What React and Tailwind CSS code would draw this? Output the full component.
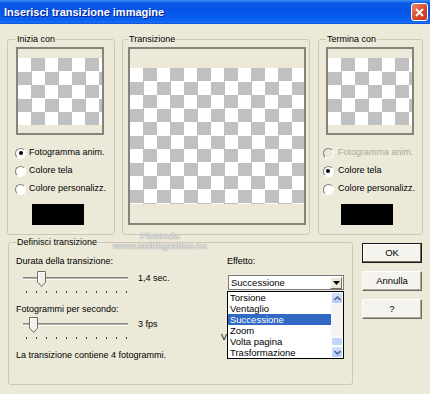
import React from 'react';

function Checker({ className }) {
  return (
    <div
      className={`bg-[conic-gradient(#c0c0c0_25%,#fff_0_50%,#c0c0c0_0_75%,#fff_0)] bg-[length:27px_27px] ${className}`}
    />
  );
}

function Radio({ checked, disabled }) {
  return (
    <span
      className={`w-[11px] h-[11px] rounded-full border border-t-[#808080] border-l-[#808080] border-b-white border-r-white flex items-center justify-center shrink-0 ${
        disabled ? 'bg-[#ece9d8]' : 'bg-white'
      }`}
    >
      {checked && <span className="w-[4px] h-[4px] rounded-full bg-black" />}
    </span>
  );
}

function Group({ label, className, children }) {
  return (
    <fieldset className={`border border-[#cbc8b6] rounded-[3px] ${className}`}>
      <legend className="px-[1px] leading-[11px]">{label}</legend>
      {children}
    </fieldset>
  );
}

function SidePanel({ label, checkedIndex, disabledIndex, radioClass, swatchClass, padClass }) {
  const items = ['Fotogramma anim.', 'Colore tela', 'Colore personalizz.'];
  return (
    <Group label={label} className={`w-[103px] h-[201px] ${padClass}`}>
      <div className="mt-[2px] w-[88px] h-[88px] border-2 border-[#85837a] flex flex-col justify-center">
        <Checker className="w-full h-[67px]" />
      </div>
      <div className="mt-[9px] flex flex-col">
        {items.map((t, i) => (
          <div key={t} className={`h-[18px] flex items-center whitespace-nowrap ${radioClass}`}>
            <Radio checked={i === checkedIndex} disabled={i === disabledIndex} />
            <span className={i === disabledIndex ? 'text-[#aca899]' : ''}>{t}</span>
          </div>
        ))}
      </div>
      <div className={`mt-[6px] w-[52px] h-[21px] bg-black ${swatchClass}`} />
    </Group>
  );
}

function Slider({ pos }) {
  const ticks = Array.from({ length: 11 }, (_, i) => 10 + i * 10);
  return (
    <svg width="120" height="26" viewBox="0 0 120 26">
      <rect x="7" y="8" width="105" height="1" fill="#8c8a80" />
      <rect x="7" y="9" width="105" height="1" fill="#b5b3a8" />
      <rect x="7" y="10" width="105" height="1" fill="#ffffff" />
      {ticks.map((x) => (
        <rect key={x} x={x} y="22" width="1" height="2" fill="#3a3a3a" />
      ))}
      <path
        d={`M${pos + 0.5} 2.5 H${pos + 8.5} V13 L${pos + 4.5} 17.5 L${pos + 0.5} 13 Z`}
        fill="#f1f0ea"
        stroke="#6f6e66"
      />
      <path d={`M${pos + 1.5} 12.5 V3.5 H${pos + 7.5}`} fill="none" stroke="#ffffff" />
    </svg>
  );
}

function ScrollBtn({ up }) {
  return (
    <div className="h-[12px] rounded-[2px] border border-white bg-[linear-gradient(180deg,#d4e0fd,#b7cbf8)] flex items-center justify-center">
      <svg width="7" height="5" viewBox="0 0 7 5">
        <path
          d={up ? 'M0.5 4 L3.5 1 L6.5 4' : 'M0.5 1 L3.5 4 L6.5 1'}
          fill="none"
          stroke="#4d6185"
          strokeWidth="1.5"
        />
      </svg>
    </div>
  );
}

function Button({ children, primary }) {
  return (
    <button
      className={`w-[60px] h-[20px] bg-[#f4f3ee] text-[9.5px] leading-none flex items-center justify-center ${
        primary
          ? 'border border-[#1a1a1a] shadow-[inset_-1px_-1px_#716f64,inset_1px_1px_#fff]'
          : 'border border-t-white border-l-white border-b-[#716f64] border-r-[#716f64] shadow-[inset_-1px_-1px_#aca899]'
      }`}
    >
      {children}
    </button>
  );
}

export default function App() {
  const effects = ['Torsione', 'Ventaglio', 'Successione', 'Zoom', 'Volta pagina', 'Trasformazione'];

  return (
    <div className="relative w-[430px] h-[394px] overflow-hidden bg-[#ece9d8] font-['Liberation_Sans',Arial,sans-serif] text-[9px] text-black">
      {/* title bar */}
      <div className="h-[24px] flex items-center pl-[4px] pr-[2px] bg-[linear-gradient(180deg,#3d8ef8_0%,#0c5be6_12%,#0553e6_45%,#0a62f2_85%,#1a6ff5_93%,#0a4fd8_100%)]">
        <span className="text-white font-bold text-[11px] [text-shadow:1px_1px_#0a1e8c]">
          Inserisci transizione immagine
        </span>
        <div className="ml-auto w-[17px] h-[18px] rounded-[3px] border border-white bg-[linear-gradient(135deg,#f08a6c,#d5492a_55%,#c23a1c)] flex items-center justify-center">
          <svg width="9" height="9" viewBox="0 0 9 9">
            <path d="M1 1 L8 8 M8 1 L1 8" stroke="#fff" strokeWidth="1.8" />
          </svg>
        </div>
      </div>

      <div className="px-[7px] pt-[10px]">
        {/* top row */}
        <div className="flex gap-[7px]">
          <SidePanel
            label="Inizia con"
            checkedIndex={0}
            radioClass="ml-[-1px] gap-[3px]"
            swatchClass="ml-[16px]"
            padClass="w-[107px] px-[8px]"
          />

          <Group label="Transizione" className="w-[191px] h-[201px] pl-[5px]">
            <div className="mt-[2px] w-[178px] h-[178px] border-2 border-[#85837a] flex flex-col justify-center">
              <Checker className="w-full h-[136px]" />
            </div>
          </Group>

          <div className="ml-[1px]">
            <SidePanel
              label="Termina con"
              checkedIndex={1}
              disabledIndex={0}
              radioClass="ml-[-3px] gap-[4px]"
              swatchClass="ml-[15px]"
              padClass="px-[7px]"
            />
          </div>
        </div>

        {/* bottom row */}
        <div className="flex mt-[2px]">
          <Group label="Definisci transizione" className="ml-[1px] w-[345px] h-[148px] pl-[7px]">
            <div className="flex">
              <div className="w-[205px] flex flex-col">
                <div className="mt-[8px] leading-[11px]">Durata della transizione:</div>
                <div className="mt-[2px] flex items-start">
                  <Slider pos={21} />
                  <span className="mt-[4px] ml-[2px] leading-[11px]">1,4 sec.</span>
                </div>
                <div className="mt-[9px] leading-[11px]">Fotogrammi per secondo:</div>
                <div className="flex items-start">
                  <Slider pos={13} />
                  <span className="mt-[4px] ml-[2px] leading-[11px]">3 fps</span>
                </div>
                <div className="mt-[9px] leading-[11px]">La transizione contiene 4 fotogrammi.</div>
              </div>

              <div className="relative flex-1 flex flex-col">
                <div className="mt-[8px] ml-[6px] leading-[11px]">Effetto:</div>
                <div className="mt-[8px] ml-[7px] w-[116px] h-[15px] border border-[#7a7a7a] bg-white flex items-center">
                  <span className="pl-[2px] text-[9.5px] leading-none">Successione</span>
                  <div className="ml-auto mr-[1px] w-[12px] h-[12px] bg-[#ece9d8] border border-t-white border-l-white border-b-[#716f64] border-r-[#716f64] flex items-center justify-center">
                    <svg width="7" height="4" viewBox="0 0 7 4">
                      <path d="M0 0 H7 L3.5 4 Z" fill="#000" />
                    </svg>
                  </div>
                </div>
                {/* only the first letter of this label shows beside the open list */}
                <div className="mt-[42px] leading-[11px]">V</div>

                {/* open dropdown list */}
                <div className="absolute top-[43px] left-[6px] w-[117px] h-[68px] border border-black bg-white flex">
                  <div className="w-[103px] flex flex-col">
                    {effects.map((e) => (
                      <div
                        key={e}
                        className={`h-[11px] leading-[11px] pl-[2px] text-[9.5px] ${
                          e === 'Successione' ? 'bg-[#316ac5] text-white' : ''
                        }`}
                      >
                        {e}
                      </div>
                    ))}
                  </div>
                  <div className="ml-auto w-[12px] flex flex-col bg-[#f5f4f0]">
                    <ScrollBtn up />
                    <div className="flex-1 flex flex-col">
                      <div className="mt-auto h-[9px] rounded-[2px] border border-white bg-[#c3d4fb]" />
                    </div>
                    <ScrollBtn />
                  </div>
                </div>
              </div>
            </div>
          </Group>

          <div className="ml-[9px] mt-[6px] flex flex-col gap-[8px]">
            <Button primary>OK</Button>
            <Button>Annulla</Button>
            <Button>?</Button>
          </div>
        </div>
      </div>

      {/* watermark */}
      <div className="absolute top-[231px] left-[112px] w-[96px] text-center font-bold text-[9.5px] leading-[10px] text-[#e6e6e6] [text-shadow:0_0_1px_#6a6a6a]">
        <div>Pinuccia</div>
        <div>www.maldigrafica.eu</div>
      </div>
    </div>
  );
}
